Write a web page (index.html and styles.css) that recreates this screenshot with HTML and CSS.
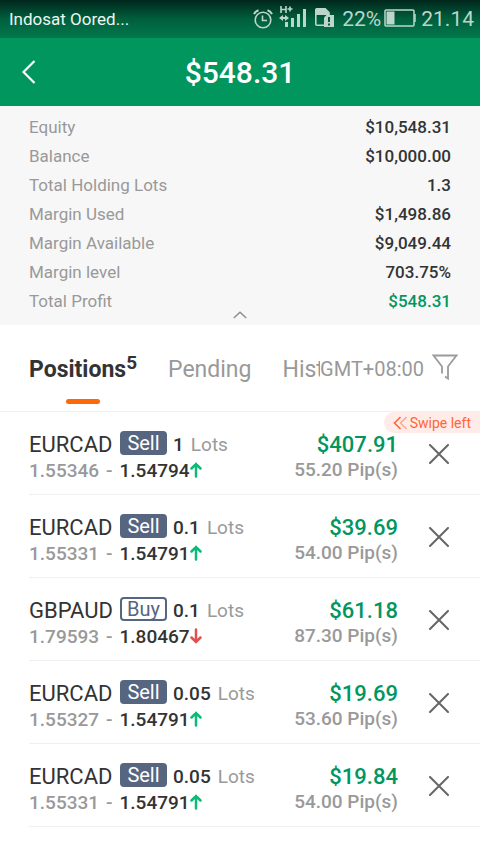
FILE: index.html
```html
<!DOCTYPE html>
<html lang="en">
<head>
    <meta charset="UTF-8">
    <meta name="viewport" content="width=device-width, initial-scale=1.0">
    <title>Positions</title>
    <link rel="stylesheet" href="styles.css">
</head>
<body>
    <!-- shared icons -->
    <svg class="sprite" aria-hidden="true">
        <symbol id="close" viewBox="0 0 20 20">
            <path d="M1 1l18 18M19 1L1 19" fill="none" stroke="#666" stroke-width="2" stroke-linecap="round"/>
        </symbol>
        <symbol id="up" viewBox="0 0 12 16">
            <path d="M6 14.5V2M1.5 6.5L6 2l4.500 4.500" fill="none" stroke="#0bbb78" stroke-width="2.500" stroke-linecap="round"/>
        </symbol>
        <symbol id="down" viewBox="0 0 12 16">
            <path d="M6 1.500V14M1.500 9.500L6 14l4.500-4.500" fill="none" stroke="#e0504f" stroke-width="2.500" stroke-linecap="round"/>
        </symbol>
    </svg>

    <div class="status-bar">
        <span class="carrier">Indosat Oored...</span>
        <div class="status-icons">
            <svg class="alarm" width="20" height="20" viewBox="0 0 20 20" fill="none" stroke="currentColor" stroke-width="1.6">
                <circle cx="10" cy="11" r="7.800"/>
                <path d="M9.500 6.500v5h4.500"/>
                <path d="M1 5.200C1.800 3.400 3.300 2 5.500 1.300M19 5.200C18.200 3.400 16.700 2 14.500 1.300" stroke-width="2"/>
            </svg>
            <svg class="signal" width="28" height="24" viewBox="0 0 28 24" fill="currentColor">
                <path d="M2 1v7M7 1v7M2 4.500h5M8.500 4h5M11 1.500v5" fill="none" stroke="currentColor" stroke-width="1.600"/>
                <path d="M0 13l4-3v6zM10 13l-4-3v6z"/>
                <path d="M4 12h2v2H4z"/>
                <path d="M6 17h3v5H6zM12 13h3v9h-3zM18 9h3v13h-3zM24 4h3v18h-3z"/>
            </svg>
            <svg class="sim" width="20" height="20" viewBox="0 0 20 20">
                <path d="M9 17.200H1.800c-.6 0-1-.4-1-1V1.800c0-.6.4-1 1-1h8.400L14 4.500V7" fill="none" stroke="currentColor" stroke-width="1.600"/>
                <path d="M1 1h9l4 4v2H1z" fill="currentColor"/>
                <path d="M9 9.500L11.500 7H19v12H9z" fill="currentColor"/>
                <path d="M14 9v5M14 15.500v2" stroke="#005a3a" stroke-width="2"/>
            </svg>
            <span class="percent">22%</span>
            <svg class="battery" width="32" height="18" viewBox="0 0 32 18">
                <rect x="1" y="1" width="29" height="16" rx="1" fill="none" stroke="currentColor" stroke-width="1.500"/>
                <rect x="2.500" y="2.500" width="8" height="13" fill="currentColor"/>
                <path d="M31 5v8" stroke="currentColor" stroke-width="1.500"/>
            </svg>
            <span class="clock">21.14</span>
        </div>
    </div>

    <header class="header">
        <button class="back" aria-label="Back">
            <svg width="14" height="24" viewBox="0 0 14 24">
                <path d="M12.500 1L1.500 12l11 11" fill="none" stroke="#fff" stroke-width="2.200"/>
            </svg>
        </button>
        <h1>$548.31</h1>
    </header>

    <section class="summary">
        <dl>
            <div><dt>Equity</dt><dd>$10,548.31</dd></div>
            <div><dt>Balance</dt><dd>$10,000.00</dd></div>
            <div><dt>Total Holding Lots</dt><dd>1.3</dd></div>
            <div><dt>Margin Used</dt><dd>$1,498.86</dd></div>
            <div><dt>Margin Available</dt><dd>$9,049.44</dd></div>
            <div><dt>Margin level</dt><dd>703.75%</dd></div>
            <div><dt>Total Profit</dt><dd class="green">$548.31</dd></div>
        </dl>
        <button class="collapse" aria-label="Collapse">
            <svg width="14" height="8" viewBox="0 0 14 8">
                <path d="M.8 7L7 1.200 13.200 7" fill="none" stroke="#8c8c8c" stroke-width="1.400"/>
            </svg>
        </button>
    </section>

    <div class="toolbar">
        <nav class="tabs">
            <button class="tab active">Positions<sup>5</sup></button>
            <button class="tab">Pending</button>
            <button class="tab">History</button>
        </nav>
        <span class="timezone">GMT+08:00</span>
        <button class="filter" aria-label="Filter">
            <svg width="26" height="26" viewBox="0 0 26 26">
                <path d="M10 19.500V12.500L1.500 1.500h23L16 12.500V24.500l-3-2" fill="none" stroke="#9b9b9b" stroke-width="1.800"/>
            </svg>
        </button>
    </div>

    <main class="positions">
        <div class="swipe">
            <svg width="15" height="14" viewBox="0 0 15 14" fill="none" stroke="#ff6535" stroke-width="1.600">
                <path d="M7.500 1l-6 6 6 6"/>
                <path d="M13.500 1l-6 6 6 6" opacity=".5"/>
            </svg>
            <span>Swipe left</span>
        </div>
        <ul>
            <li>
                <div class="info">
                    <div class="line"><span class="symbol">EURCAD</span><span class="side sell">Sell</span><b>1</b><span class="unit">Lots</span></div>
                    <div class="price">1.55346<span class="dash">-</span><b>1.54794</b><svg width="12" height="16"><use href="#up"/></svg></div>
                </div>
                <div class="result">
                    <div class="profit">$407.91</div>
                    <div class="pips">55.20 Pip(s)</div>
                </div>
                <button class="close" aria-label="Close position"><svg width="20" height="20"><use href="#close"/></svg></button>
            </li>
            <li>
                <div class="info">
                    <div class="line"><span class="symbol">EURCAD</span><span class="side sell">Sell</span><b>0.1</b><span class="unit">Lots</span></div>
                    <div class="price">1.55331<span class="dash">-</span><b>1.54791</b><svg width="12" height="16"><use href="#up"/></svg></div>
                </div>
                <div class="result">
                    <div class="profit">$39.69</div>
                    <div class="pips">54.00 Pip(s)</div>
                </div>
                <button class="close" aria-label="Close position"><svg width="20" height="20"><use href="#close"/></svg></button>
            </li>
            <li>
                <div class="info">
                    <div class="line"><span class="symbol">GBPAUD</span><span class="side buy">Buy</span><b>0.1</b><span class="unit">Lots</span></div>
                    <div class="price">1.79593<span class="dash">-</span><b>1.80467</b><svg width="12" height="16"><use href="#down"/></svg></div>
                </div>
                <div class="result">
                    <div class="profit">$61.18</div>
                    <div class="pips">87.30 Pip(s)</div>
                </div>
                <button class="close" aria-label="Close position"><svg width="20" height="20"><use href="#close"/></svg></button>
            </li>
            <li>
                <div class="info">
                    <div class="line"><span class="symbol">EURCAD</span><span class="side sell">Sell</span><b>0.05</b><span class="unit">Lots</span></div>
                    <div class="price">1.55327<span class="dash">-</span><b>1.54791</b><svg width="12" height="16"><use href="#up"/></svg></div>
                </div>
                <div class="result">
                    <div class="profit">$19.69</div>
                    <div class="pips">53.60 Pip(s)</div>
                </div>
                <button class="close" aria-label="Close position"><svg width="20" height="20"><use href="#close"/></svg></button>
            </li>
            <li>
                <div class="info">
                    <div class="line"><span class="symbol">EURCAD</span><span class="side sell">Sell</span><b>0.05</b><span class="unit">Lots</span></div>
                    <div class="price">1.55331<span class="dash">-</span><b>1.54791</b><svg width="12" height="16"><use href="#up"/></svg></div>
                </div>
                <div class="result">
                    <div class="profit">$19.84</div>
                    <div class="pips">54.00 Pip(s)</div>
                </div>
                <button class="close" aria-label="Close position"><svg width="20" height="20"><use href="#close"/></svg></button>
            </li>
        </ul>
    </main>
</body>
</html>
```
FILE: styles.css
```css
* {
    box-sizing: border-box;
}
body {
    margin: 0;
    font-family: Roboto, sans-serif;
    background: #fff;
    color: #333;
}
button {
    padding: 0;
    border: none;
    background: none;
    font-family: inherit;
    cursor: pointer;
}
svg {
    display: block;
    flex: none;
}
.sprite {
    display: none;
}

.status-bar {
    display: flex;
    align-items: center;
    justify-content: space-between;
    height: 38px;
    padding: 0 6px 0 9px;
    background: linear-gradient(#00261b, #005f3d 50%, #00784c);
    color: #bcd6cb;
}
.carrier {
    font-size: 17px;
    color: #eef6f2;
}
.status-icons {
    display: flex;
    align-items: center;
    font-size: 21px;
}
.signal {
    margin: 0 8px 4px 6px;
}
.sim {
    margin-bottom: 2px;
}
.percent {
    margin-left: 7px;
}
.battery {
    margin: 0 5px 2px 3px;
}

.header {
    display: grid;
    grid-template-columns: 1fr auto 1fr;
    align-items: center;
    height: 68px;
    padding: 0 22px;
    background: #02965f;
}
.back {
    justify-self: start;
}
h1 {
    margin: 0;
    font-size: 30px;
    font-weight: 500;
    color: #fff;
}

.summary {
    position: relative;
    padding: 7px 29px 9px;
    background: #f7f7f7;
}
dl {
    margin: 0;
    font-size: 17px;
    line-height: 29px;
}
dl div {
    display: flex;
    justify-content: space-between;
}
dt {
    color: #999;
}
dd {
    margin: 0;
    font-weight: 500;
}
.green {
    color: #02965f;
}
.collapse {
    position: absolute;
    bottom: 6px;
    left: 50%;
    transform: translateX(-50%);
}

.toolbar {
    display: flex;
    align-items: center;
    height: 87px;
    padding: 0 22px 0 29px;
    border-bottom: 1px solid #f0f0f0;
}
.tabs {
    display: flex;
    flex: 1;
    align-self: stretch;
    gap: 31px;
    min-width: 0;
    overflow: hidden;
}
.tab {
    position: relative;
    flex: none;
    padding-top: 2px;
    font-size: 23px;
    color: #999;
}
.tab sup {
    font-size: 19px;
    line-height: 0;
    vertical-align: 8px;
}
.tab.active {
    font-weight: 700;
    color: #333;
}
.tab.active::after {
    content: '';
    position: absolute;
    bottom: 7px;
    left: 50%;
    width: 34px;
    height: 5px;
    border-radius: 3px;
    background: #ff6808;
    transform: translateX(-50%);
}
.timezone {
    padding-top: 2px;
    font-size: 20px;
    color: #999;
}
.filter {
    margin-left: 8px;
    padding-bottom: 2px;
}

.positions {
    position: relative;
}
.swipe {
    position: absolute;
    top: 0;
    right: 0;
    display: flex;
    align-items: center;
    gap: 2px;
    height: 21px;
    padding: 0 9px;
    border-radius: 11px 0 0 11px;
    background: #ffece8;
    color: #ff6535;
    font-size: 14px;
}
ul {
    margin: 0;
    padding: 0 0 0 29px;
    list-style: none;
}
li {
    display: flex;
    align-items: stretch;
    padding: 18px 31px 12px 0;
    border-bottom: 1px solid #f0f0f0;
}
li b {
    font-weight: 500;
    color: #333;
}
.info {
    flex: 1;
}
.line {
    display: flex;
    align-items: center;
    height: 28px;
    font-size: 19px;
}
.symbol {
    width: 91px;
    font-size: 22px;
}
.side {
    width: 47px;
    height: 24px;
    margin: 0 6px 2px 0;
    border: 2px solid #566680;
    border-radius: 4px;
    font-size: 20px;
    line-height: 20px;
    text-align: center;
}
.sell {
    background: #566680;
    color: #fff;
}
.buy {
    color: #566680;
}
.unit {
    margin-left: 7px;
    color: #999;
}
.price {
    display: flex;
    align-items: center;
    height: 24px;
    font-size: 19px;
    font-weight: 500;
    color: #999;
}
.dash {
    margin: 0 7px;
}
.result {
    padding-top: 1px;
    text-align: right;
}
.profit {
    font-size: 22px;
    font-weight: 500;
    line-height: 27px;
    color: #02965f;
}
.pips {
    font-size: 19px;
    font-weight: 500;
    line-height: 24px;
    color: #999;
}
.close {
    margin-left: 31px;
    padding-bottom: 4px;
}
```
